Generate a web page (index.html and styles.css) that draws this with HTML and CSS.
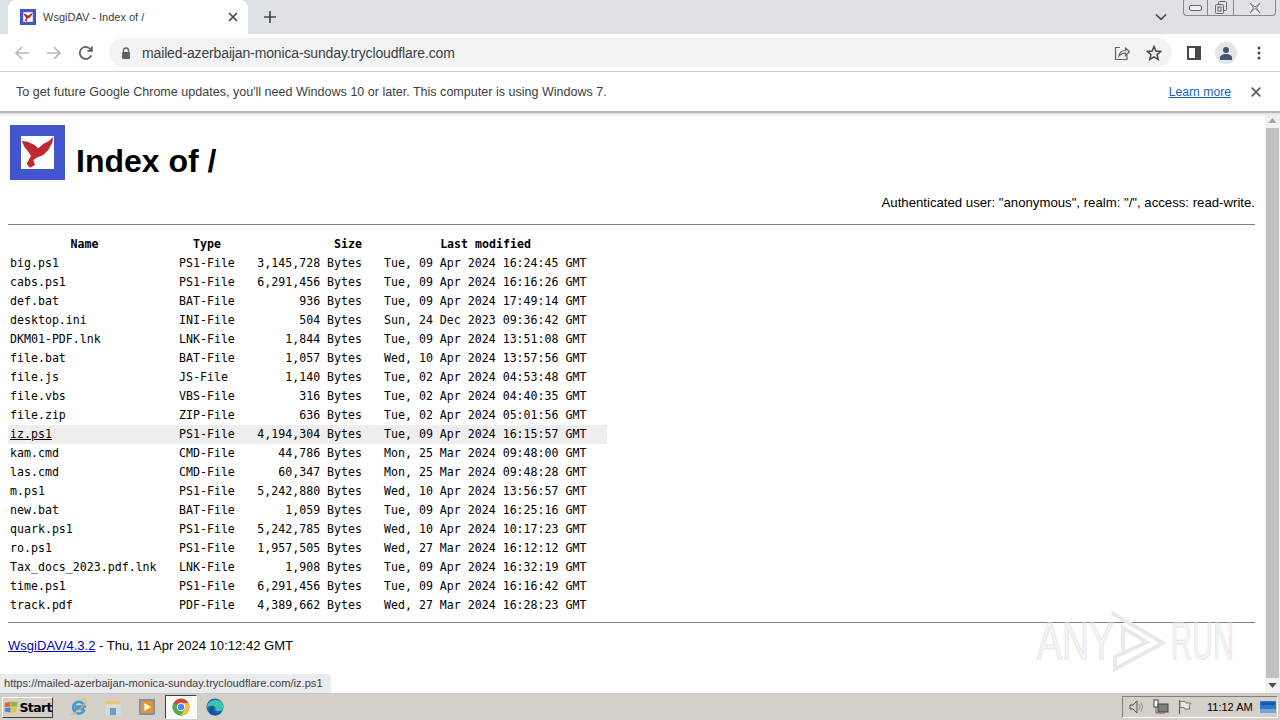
FILE: index.html
```html
<!DOCTYPE html>
<html lang="en">
<head>
<meta charset="utf-8">
<title>WsgiDAV - Index of /</title>
<link rel="stylesheet" href="styles.css">
</head>
<body>
<div class="window">
  <div class="tabstrip">
    <div class="tab">
      <svg class="favicon" viewBox="0 0 55 55"><rect width="55" height="55" fill="#4355cc"/><rect x="11" y="11" width="33" height="33" fill="#fff"/><path d="M11.700 15.700 18.300 17 25 20.300 28.300 23.300 33.300 19 39.300 15.700 43.300 11.700 42.300 17.700 38.300 25 33.300 30 26.700 32.700 23.300 35 25 40 20 42.700 16.700 39 19 34.300 21 31 18.300 26.700 14.300 21.700Z" fill="#bf2a30"/></svg>
      <span class="tab-title">WsgiDAV - Index of /</span>
      <svg class="tab-close" viewBox="0 0 10 10"><path d="M1 1 9 9M9 1 1 9" stroke="#45494e" stroke-width="1.700" fill="none"/></svg>
    </div>
    <svg class="newtab" viewBox="0 0 12 12"><path d="M6 0v12M0 6h12" stroke="#45494e" stroke-width="1.700" fill="none"/></svg>
    <svg class="tab-menu" viewBox="0 0 12 8"><path d="M1 1.500 6 6.300 11 1.500" stroke="#45494e" stroke-width="1.700" fill="none"/></svg>
    <div class="winctl">
      <span class="winbtn min"><svg viewBox="0 0 14 6" width="14" height="6"><rect x=".5" y=".5" width="12" height="5" rx="1.500" fill="#eef0f3" stroke="#666"/></svg></span>
      <span class="winbtn rest"><svg viewBox="0 0 14 14" width="14" height="14"><rect x="4.500" y=".5" width="8" height="9" rx="1" fill="none" stroke="#666"/><rect x="1.500" y="3.500" width="8" height="9" rx="1" fill="#dee1e6" stroke="#666"/><rect x="4" y="6" width="3" height="4" fill="none" stroke="#666"/></svg></span>
      <span class="winbtn cls"><svg viewBox="0 0 14 10" width="14" height="10"><path d="M2 0 L7 4 12 0 M2 10 7 5.500 12 10 M2 0 5.500 5 2 10 M12 0 8.500 5 12 10" fill="#eef0f3" stroke="#777"/></svg></span>
    </div>
  </div>
  <div class="toolbar">
    <svg class="nav" viewBox="0 0 16 16"><path d="M15 8H2M8 2 2 8l6 6" stroke="#b4b7bb" stroke-width="1.700" fill="none"/></svg>
    <svg class="nav" viewBox="0 0 16 16"><path d="M1 8h13M8 2l6 6-6 6" stroke="#b4b7bb" stroke-width="1.700" fill="none"/></svg>
    <svg class="nav" viewBox="0 0 16 16"><path d="M13.200 10.500A6 6 0 1 1 13 5M13.800 1.500v4.400H9.400" stroke="#5a5e63" stroke-width="1.800" fill="none"/></svg>
    <div class="omnibox">
      <svg class="lock" viewBox="0 0 10 12"><path d="M2.500 5V3.500a2.500 2.500 0 0 1 5 0V5" stroke="#5f6368" stroke-width="1.300" fill="none"/><rect x="1" y="5" width="8" height="7" rx="1" fill="#5f6368"/></svg>
      <span class="url">mailed-azerbaijan-monica-sunday.trycloudflare.com</span>
      <svg class="omni-icon share" viewBox="0 0 16 16"><path d="M6 2.500H1.500V14.500H13V10" stroke="#5f6368" stroke-width="1.200" fill="none"/><path d="M5 11c.5-4 3-5.500 6.500-5.500V3L15.500 6.700 11.500 10.500V8C8.500 8 6.500 9 5 11Z" stroke="#5f6368" stroke-width="1.200" fill="none"/></svg>
      <svg class="omni-icon star" viewBox="0 0 16 16"><path d="M8 1.500 9.900 6 14.800 6.400 11.100 9.600 12.200 14.400 8 11.900 3.800 14.400 4.900 9.600 1.200 6.400 6.100 6Z" stroke="#45494e" stroke-width="1.500" fill="none"/></svg>
    </div>
    <svg class="sidepanel" viewBox="0 0 14 14"><rect x="1" y="1" width="12" height="12" fill="#fff" stroke="#45494e" stroke-width="2"/><rect x="8" y="1" width="5" height="12" fill="#45494e"/></svg>
    <div class="avatar"><svg viewBox="0 0 14 14" width="14" height="14"><circle cx="7" cy="4" r="3" fill="#46536f"/><path d="M1 14v-2.500C1 9.500 4 8 7 8s6 1.500 6 3.500V14Z" fill="#46536f"/></svg></div>
    <svg class="dots" viewBox="0 0 4 14"><circle cx="2" cy="2" r="1.500" fill="#45494e"/><circle cx="2" cy="7" r="1.500" fill="#45494e"/><circle cx="2" cy="12" r="1.500" fill="#45494e"/></svg>
  </div>
  <div class="infobar">
    <span class="info-text">To get future Google Chrome updates, you'll need Windows 10 or later. This computer is using Windows 7.</span>
    <a class="learn" href="#">Learn more</a>
    <svg class="info-close" viewBox="0 0 10 10"><path d="M.7.7 9.300 9.300M9.300.7.7 9.300" stroke="#5a5e63" stroke-width="1.700" fill="none"/></svg>
  </div>
  <div class="viewport">
    <main class="page">
      <header class="brand">
        <svg class="logo" viewBox="0 0 55 55"><rect width="55" height="55" fill="#4355cc"/><rect x="11" y="11" width="33" height="33" fill="#fff"/><path d="M11.700 15.700 18.300 17 25 20.300 28.300 23.300 33.300 19 39.300 15.700 43.300 11.700 42.300 17.700 38.300 25 33.300 30 26.700 32.700 23.300 35 25 40 20 42.700 16.700 39 19 34.300 21 31 18.300 26.700 14.300 21.700Z" fill="#bf2a30"/></svg>
        <h1>Index of /</h1>
      </header>
      <p class="auth">Authenticated user: "anonymous", realm: "/", access: read-write.</p>
      <hr class="rule">
      <table class="listing">
        <thead><tr><th class="c-name">Name</th><th class="c-type">Type</th><th class="c-size">Size</th><th class="c-date">Last modified</th></tr></thead>
        <tbody>
          <tr><td>big.ps1</td><td>PS1-File</td><td class="r">3,145,728 Bytes</td><td>Tue, 09 Apr 2024 16:24:45 GMT</td></tr>
          <tr><td>cabs.ps1</td><td>PS1-File</td><td class="r">6,291,456 Bytes</td><td>Tue, 09 Apr 2024 16:16:26 GMT</td></tr>
          <tr><td>def.bat</td><td>BAT-File</td><td class="r">936 Bytes</td><td>Tue, 09 Apr 2024 17:49:14 GMT</td></tr>
          <tr><td>desktop.ini</td><td>INI-File</td><td class="r">504 Bytes</td><td>Sun, 24 Dec 2023 09:36:42 GMT</td></tr>
          <tr><td>DKM01-PDF.lnk</td><td>LNK-File</td><td class="r">1,844 Bytes</td><td>Tue, 09 Apr 2024 13:51:08 GMT</td></tr>
          <tr><td>file.bat</td><td>BAT-File</td><td class="r">1,057 Bytes</td><td>Wed, 10 Apr 2024 13:57:56 GMT</td></tr>
          <tr><td>file.js</td><td>JS-File</td><td class="r">1,140 Bytes</td><td>Tue, 02 Apr 2024 04:53:48 GMT</td></tr>
          <tr><td>file.vbs</td><td>VBS-File</td><td class="r">316 Bytes</td><td>Tue, 02 Apr 2024 04:40:35 GMT</td></tr>
          <tr><td>file.zip</td><td>ZIP-File</td><td class="r">636 Bytes</td><td>Tue, 02 Apr 2024 05:01:56 GMT</td></tr>
          <tr class="hover"><td><a href="#">iz.ps1</a></td><td>PS1-File</td><td class="r">4,194,304 Bytes</td><td>Tue, 09 Apr 2024 16:15:57 GMT</td></tr>
          <tr><td>kam.cmd</td><td>CMD-File</td><td class="r">44,786 Bytes</td><td>Mon, 25 Mar 2024 09:48:00 GMT</td></tr>
          <tr><td>las.cmd</td><td>CMD-File</td><td class="r">60,347 Bytes</td><td>Mon, 25 Mar 2024 09:48:28 GMT</td></tr>
          <tr><td>m.ps1</td><td>PS1-File</td><td class="r">5,242,880 Bytes</td><td>Wed, 10 Apr 2024 13:56:57 GMT</td></tr>
          <tr><td>new.bat</td><td>BAT-File</td><td class="r">1,059 Bytes</td><td>Tue, 09 Apr 2024 16:25:16 GMT</td></tr>
          <tr><td>quark.ps1</td><td>PS1-File</td><td class="r">5,242,785 Bytes</td><td>Wed, 10 Apr 2024 10:17:23 GMT</td></tr>
          <tr><td>ro.ps1</td><td>PS1-File</td><td class="r">1,957,505 Bytes</td><td>Wed, 27 Mar 2024 16:12:12 GMT</td></tr>
          <tr><td>Tax_docs_2023.pdf.lnk</td><td>LNK-File</td><td class="r">1,908 Bytes</td><td>Tue, 09 Apr 2024 16:32:19 GMT</td></tr>
          <tr><td>time.ps1</td><td>PS1-File</td><td class="r">6,291,456 Bytes</td><td>Tue, 09 Apr 2024 16:16:42 GMT</td></tr>
          <tr><td>track.pdf</td><td>PDF-File</td><td class="r">4,389,662 Bytes</td><td>Wed, 27 Mar 2024 16:28:23 GMT</td></tr>
        </tbody>
      </table>
      <hr class="rule rule-bottom">
      <p class="foot"><a href="#">WsgiDAV/4.3.2</a> - Thu, 11 Apr 2024 10:12:42 GMT</p>
    </main>
    <div class="scrollbar">
      <svg class="arrow" viewBox="0 0 10 6"><path d="M5 0 10 6H0Z" fill="#a3a3a3"/></svg>
      <div class="thumb"></div>
      <svg class="arrow" viewBox="0 0 10 6"><path d="M0 0H10L5 6Z" fill="#505050"/></svg>
    </div>
    <div class="status">https://mailed-azerbaijan-monica-sunday.trycloudflare.com/iz.ps1</div>
    <div class="watermark">
      <span class="wm-any">ANY</span>
      <svg class="wm-mark" viewBox="0 0 56 62" width="56" height="62"><path d="M2 3 53 33 5 59V47L37 32 13 18V42" fill="none" stroke="#e9e9e9" stroke-width="4"/></svg>
      <span class="wm-run">RUN</span>
    </div>
  </div>
  <div class="taskbar">
    <button class="start"><svg viewBox="0 0 18 16" width="17" height="16"><path d="M1 3 8 1 8 7.500 1 8.500Z" fill="#e5622b"/><path d="M9 1 17 2 16 7.500 9 7.500Z" fill="#7fba3a"/><path d="M1 9.500 8 8.500 8 15 1 13.500Z" fill="#3f8ad8"/><path d="M9 8.500 16 8.500 15 15 9 15Z" fill="#f1c232"/></svg>Start</button>
    <div class="quick">
      <svg class="tb" viewBox="0 0 18 18"><path d="M14.500 11.500A5.800 5.800 0 1 1 14.700 8.500H5M5 11h9" fill="none" stroke="#3b9ad9" stroke-width="2.500"/><path d="M2 16C0 18 5 15.500 9 12 14 8 18 2 15 1 13.500.5 11.500 1.500 10 2.500" stroke="#e4b94a" stroke-width="1.100" fill="none"/></svg>
      <svg class="tb" viewBox="0 0 18 18"><rect x="2" y="3" width="14" height="4" fill="#e6c975"/><rect x="1" y="6" width="16" height="11" fill="#c8dbe8"/><rect x="6" y="10" width="6" height="7" fill="#6e9cc0"/><rect x="2" y="7" width="14" height="2" fill="#f0dc9c"/></svg>
      <svg class="tb" viewBox="0 0 18 18"><rect x="1" y="1" width="16" height="16" fill="#6d93c7"/><rect x="3" y="3" width="12" height="12" fill="#f0921e"/><path d="M6.500 5 13 9 6.500 13Z" fill="#fff"/></svg>
      <span class="tb-active"><svg class="tb" viewBox="0 0 18 18"><circle cx="9" cy="9" r="8.500" fill="#db4437"/><path d="M9 9 16.500 13 A8.500 8.500 0 0 1 5 16.500Z" fill="#4caf50"/><path d="M9 9 5 16.500 A8.500 8.500 0 0 1 1.500 5Z" fill="#4caf50"/><path d="M9 5h7.200A8.500 8.500 0 0 1 9 17.500L13 11Z" fill="#fbc02d"/><circle cx="9" cy="9" r="4.200" fill="#fff"/><circle cx="9" cy="9" r="3.200" fill="#4a8af4"/></svg></span>
      <svg class="tb" viewBox="0 0 18 18"><circle cx="9" cy="9" r="8.500" fill="#0f6cb8"/><path d="M1 10C1 5 5 2 9.500 2 14 2 17.500 5 17.500 9.500 17.500 12 15 13 12 13 9.500 13 8.500 11.500 10 10 8 7 3 7 1 10Z" fill="#3ec6a4"/><path d="M4 16C7 18 12 18 15 15 12 16 8 15.500 7 12 6.500 9 8 7.500 8 7.500 4 8 2 12 4 16Z" fill="#1b4f9c"/></svg>
    </div>
    <div class="tray">
      <svg class="ti" viewBox="0 0 16 16"><path d="M1 6H4L8 2V14L4 10H1Z" fill="none" stroke="#555"/><path d="M10 5q2 3 0 6M12 3.500q3 4.500 0 9" fill="none" stroke="#8a8a8a"/></svg>
      <svg class="ti" viewBox="0 0 16 16"><rect x="1" y="1" width="4" height="7" fill="#fff" stroke="#444"/><rect x="5" y="5" width="10" height="8" fill="#7c7c7c" stroke="#444"/><path d="M3 8v6h9" stroke="#666" fill="none"/></svg>
      <svg class="ti" viewBox="0 0 16 16"><path d="M2.500 1v14" stroke="#555"/><path d="M3 2.500h5l1 1.500h5l-2 3 1 3H8l-1-1.500H3Z" fill="#e8e8e8" stroke="#777"/></svg>
      <span class="clock">11:12 AM</span>
      <svg class="desk" viewBox="0 0 16 12"><rect width="16" height="12" fill="#2b78c8"/><rect y="8" width="16" height="4" fill="#75a5d8"/><rect x="1" y="1" width="14" height="3" fill="#1b5aa8"/></svg>
    </div>
  </div>
</div>
</body>
</html>
```
FILE: styles.css
```css
* { box-sizing: border-box; }
html, body { margin: 0; height: 100%; overflow: hidden; }
body { font-family: "Liberation Sans", Arial, sans-serif; background: #fff; color: #000; }
.window { width: 1280px; height: 720px; display: flex; flex-direction: column; }

.tabstrip { height: 34px; background: #dee1e6; display: flex; align-items: flex-start; padding-left: 8px; position: relative; }
.tab { width: 240px; height: 34px; background: #fff; border-radius: 8px 8px 0 0; display: flex; align-items: center; padding: 0 10px 0 12px; }
.favicon { width: 16px; height: 16px; flex: none; }
.tab-title { font-size: 11px; color: #3c4043; margin-left: 7px; flex: 1; white-space: nowrap; }
.tab-close { width: 10px; height: 10px; }
.newtab { width: 12px; height: 12px; margin: 11px 0 0 16px; }
.tab-menu { width: 12px; height: 8px; position: absolute; left: 1155px; top: 13px; }
.winctl { position: absolute; top: 0; right: 4px; width: 93px; height: 16px; display: flex; background: #dee1e6; border: 1px solid #85888c; border-top: 0; border-radius: 0 0 4px 4px; }
.winbtn { display: flex; align-items: center; justify-content: center; height: 15px; }
.min { width: 24px; border-right: 1px solid #85888c; }
.rest { width: 26px; border-right: 1px solid #85888c; }
.cls { flex: 1; }

.toolbar { height: 38px; background: #fff; border-bottom: 1px solid #d2d3d5; display: flex; align-items: center; padding-left: 14px; }
.nav { width: 16px; height: 16px; margin-right: 16px; flex: none; }
.nav:nth-child(3) { margin-right: 15px; }
.omnibox { width: 1063px; height: 29px; border-radius: 15px; background: #f1f3f4; display: flex; align-items: center; padding-left: 12px; flex: none; }
.lock { width: 10px; height: 12px; flex: none; }
.url { font-size: 14px; color: #3c3f43; margin-left: 11px; flex: 1; white-space: nowrap; letter-spacing: -.01em; }
.omni-icon { width: 16px; height: 16px; flex: none; }
.share { margin-right: 16px; }
.star { margin-right: 10px; }
.sidepanel { width: 14px; height: 14px; margin-left: 15px; flex: none; }
.avatar { width: 22px; height: 22px; border-radius: 50%; background: #e3e5e9; display: flex; align-items: center; justify-content: center; margin-left: 14px; overflow: hidden; flex: none; }
.dots { width: 4px; height: 14px; margin-left: 20px; flex: none; }

.infobar { height: 41px; background: #fff; display: flex; align-items: center; padding: 0 19px 0 16px; border-bottom: 2px solid #b5b6b8; box-shadow: 0 2px 2px #e4e4e4; position: relative; z-index: 1; }
.info-text { font-size: 12.550px; color: #3c4043; flex: 1; white-space: nowrap; }
.learn { font-size: 12.200px; color: #1a5fc8; }
.info-close { width: 10px; height: 10px; margin-left: 20px; }

.viewport { height: 581px; display: flex; position: relative; background: #fff; border-bottom: 1px solid #c8c8c8; }
.page { width: 1265px; height: 100%; padding: 12px 0 0 8px; flex: none; }
.brand { display: flex; align-items: flex-end; padding-left: 2px; height: 55px; }
.logo { width: 55px; height: 55px; flex: none; }
h1 { font-size: 32px; font-weight: bold; margin: 0 0 0 11px; line-height: 37px; }
.auth { margin: 15px 0 0; font-size: 13.200px; line-height: 16px; text-align: right; width: 1247px; }
.rule { width: 1247px; margin: 13px 0 0; border: 0; border-top: 1px solid #808080; height: 1px; }
.listing { border-collapse: separate; border-spacing: 0; margin-top: 10px; font-family: "DejaVu Sans Mono", monospace; font-size: 11.600px; color: #000; }
.listing th, .listing td { padding: 0 20px 0 2px; height: 19px; line-height: 19px; white-space: nowrap; font-weight: normal; text-align: left; }
.listing th { font-weight: bold; text-align: center; }
.listing th.c-name { padding-left: 4px; }
.listing th.c-size, .listing td.r { text-align: right; }
.hover td { background: #eeeeee; }
.hover a { color: #000; }
.c-name { width: 169px; }
.c-type { width: 78px; }
.c-size { width: 127px; }
.c-date { width: 225px; }
.rule-bottom { margin-top: 7px; }
.foot { margin: 15px 0 0; font-size: 13.050px; line-height: 16px; }
.foot a { color: #0000c8; }

.scrollbar { width: 15px; flex: 1; background: #f1f1f1; display: flex; flex-direction: column; align-items: center; }
.arrow { width: 9px; height: 5px; margin: 5px 0; flex: none; }
.thumb { width: 13px; flex: 1; background: #c1c1c1; }
.status { position: absolute; left: 0; bottom: 0; height: 19px; width: 331px; background: #e9ebee; border-radius: 0 4px 0 0; font-size: 11.100px; line-height: 18px; padding-left: 4px; color: #3c4043; white-space: nowrap; }
.watermark { position: absolute; left: 1037px; top: 497px; width: 195px; height: 62px; display: flex; align-items: center; color: #f4f4f4; -webkit-text-stroke: 1px #e6e6e6; font-size: 52px; line-height: 62px; }
.watermark span { display: inline-block; transform-origin: left center; white-space: nowrap; }
.wm-any { width: 73px; transform: scaleX(.72); }
.wm-mark { flex: none; }
.wm-run { width: 61px; margin-left: 5px; transform: scaleX(.56); }

.taskbar { flex: 1; background: #d4d0c8; display: flex; align-items: center; position: relative; }
.start { height: 21px; width: 51px; margin-left: 2px; padding: 0 0 0 1px; border: 1px solid; border-color: #fff #404040 #404040 #fff; background: #d4d0c8; font: bold 12.500px "DejaVu Sans", sans-serif; letter-spacing: -.6px; display: flex; align-items: center; gap: 1px; color: #000; }
.quick { display: flex; align-items: center; margin-left: 17px; gap: 16px; }
.tb { width: 18px; height: 18px; flex: none; display: block; }
.tb-active { width: 32px; height: 24px; display: flex; align-items: center; justify-content: center; background: #fbfafa; border: 1px solid; border-color: #404040 #fff #fff #404040; margin: 0 -7px; }
.tray { margin-left: auto; height: 22px; width: 156px; margin-right: 2px; border: 1px solid; border-color: #808080 #fff #fff #808080; display: flex; align-items: center; padding-left: 6px; gap: 8px; }
.ti { width: 16px; height: 16px; flex: none; }
.clock { font-size: 11px; color: #000; margin-left: 6px; white-space: nowrap; }
.desk { width: 16px; height: 12px; margin-left: -1px; flex: none; }
```
